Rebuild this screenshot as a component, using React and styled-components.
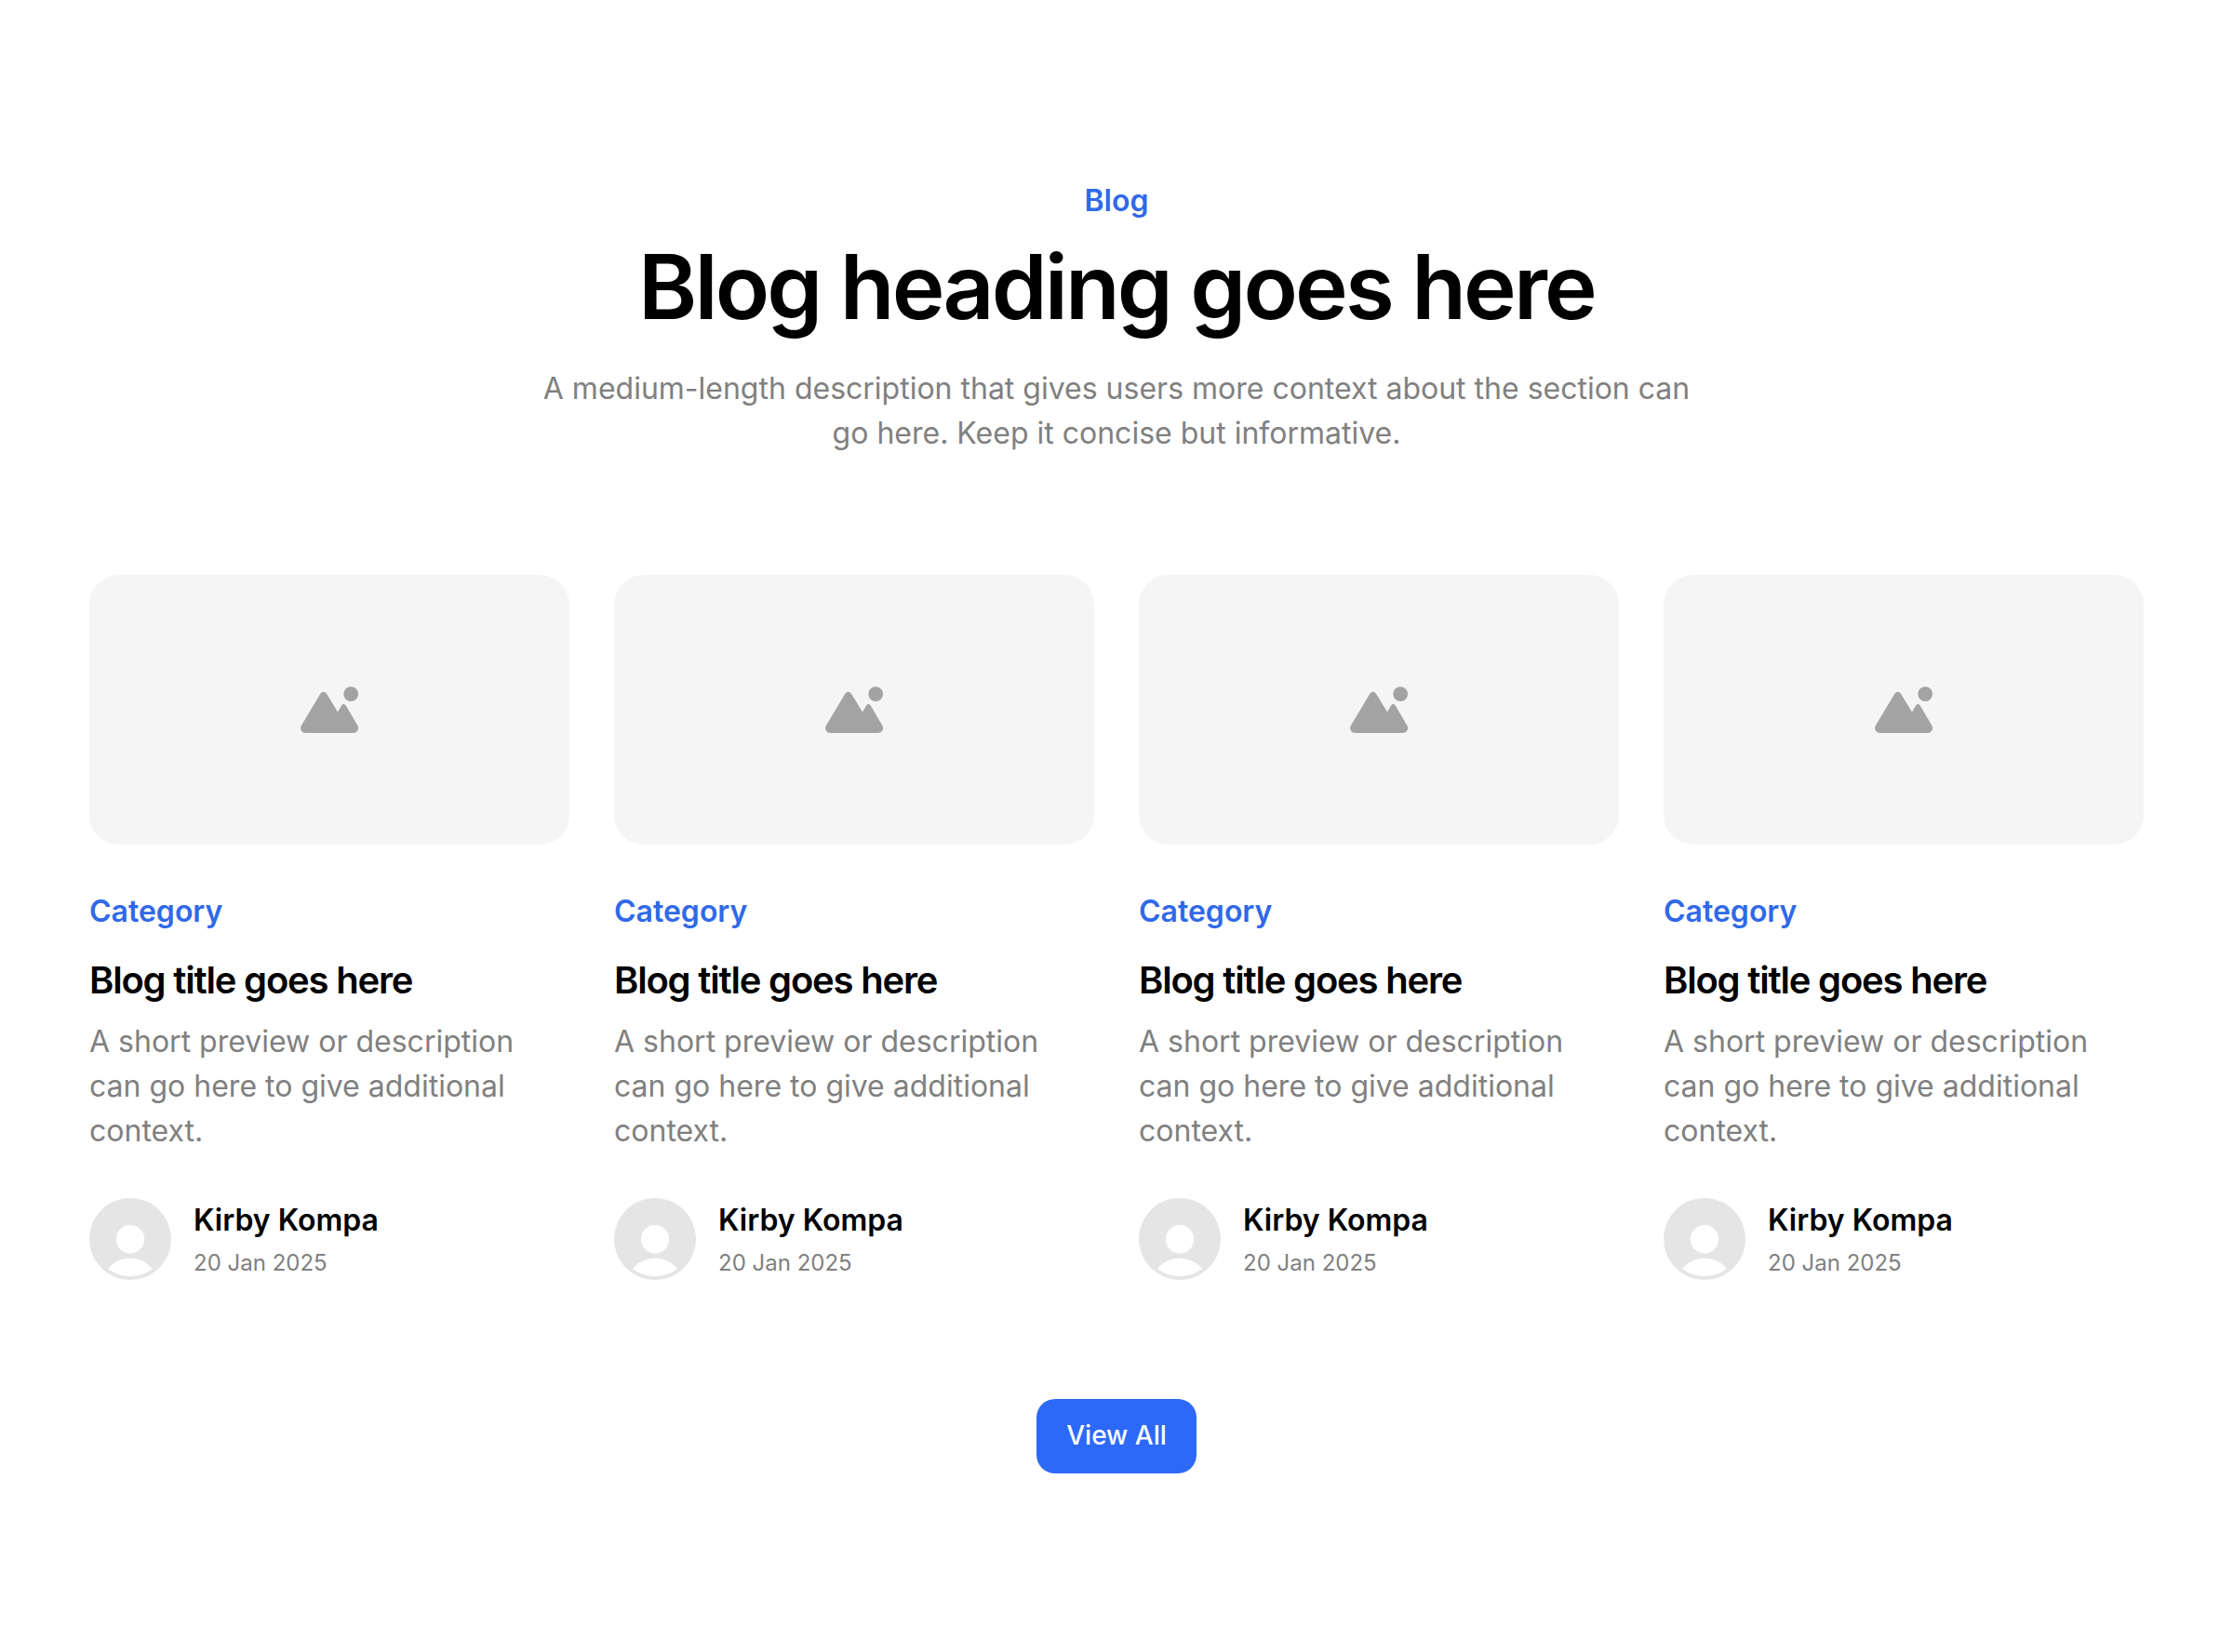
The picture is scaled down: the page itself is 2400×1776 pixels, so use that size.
import React from 'react';
import styled, { createGlobalStyle } from 'styled-components';

const colors = {
  primary: '#2d69f9',
  link: '#3069e8',
  text: '#000000',
  muted: '#808080',
  placeholder: '#f5f5f5',
  icon: '#a3a3a3',
  avatar: '#e5e5e5',
  white: '#ffffff',
};

const posts = [1, 2, 3, 4].map(id => ({
  id,
  category: 'Category',
  title: 'Blog title goes here',
  preview: 'A short preview or description can go here to give additional context.',
  author: 'Kirby Kompa',
  date: '20 Jan 2025',
}));

const GlobalStyle = createGlobalStyle`
  * {
    box-sizing: border-box;
  }

  body {
    margin: 0;
    background: ${colors.white};
    color: ${colors.text};
    font-family: Inter, sans-serif;
  }
`;

const Section = styled.section`
  display: flex;
  flex-direction: column;
  align-items: center;
  gap: 128px;
  padding: 192px 96px;
`;

const Header = styled.header`
  display: flex;
  flex-direction: column;
  align-items: center;
  width: 1280px;
  text-align: center;
`;

const Label = styled.span`
  color: ${colors.link};
  font-size: 32px;
  font-weight: 600;
  line-height: 48px;
`;

const Heading = styled.h1`
  margin: 16px 0 32px;
  font-size: 96px;
  font-weight: 600;
  line-height: 1.1;
  letter-spacing: -0.03em;
`;

const Text = styled.p`
  margin: 0;
  color: ${colors.muted};
  font-size: 32px;
  line-height: 48px;
`;

const Grid = styled.div`
  display: grid;
  grid-template-columns: repeat(4, 1fr);
  gap: 48px;
  width: 100%;
`;

const Card = styled.article`
  display: flex;
  flex-direction: column;
`;

const Thumbnail = styled.div`
  display: flex;
  align-items: center;
  justify-content: center;
  aspect-ratio: 16 / 9;
  margin-bottom: 48px;
  border-radius: 32px;
  background: ${colors.placeholder};
`;

const Title = styled.h2`
  margin: 24px 0 16px;
  font-size: 40px;
  font-weight: 600;
  line-height: 1.3;
  letter-spacing: -0.03em;
`;

const Author = styled.div`
  display: flex;
  gap: 24px;
  margin-top: 48px;
`;

const AuthorInfo = styled.div`
  display: flex;
  flex-direction: column;
  gap: 4px;
`;

const Name = styled.span`
  font-size: 32px;
  font-weight: 600;
  line-height: 48px;
`;

const PostDate = styled.span`
  color: ${colors.muted};
  font-size: 24px;
  line-height: 36px;
`;

const Button = styled.button`
  height: 80px;
  padding: 19px 32px 21px;
  border: 0;
  border-radius: 20px;
  background: ${colors.primary};
  color: ${colors.white};
  font-family: inherit;
  font-size: 28px;
  font-weight: 500;
  line-height: 40px;
  white-space: nowrap;
`;

const ImageIcon = () => (
  <svg width="72" height="72" viewBox="0 0 72 72" fill={colors.icon} aria-hidden="true">
    <circle cx="59.2" cy="19.1" r="7.9" />
    <path d="M26.4 18.8Q29.7 14.9 33 18.8L45 38.5L49.1 31.4Q51.4 28 53.7 31.4L66.2 52.7C68.6 56.7 66 60.9 62 60.9H10.4C6 60.9 3.8 56.7 6 52.7Z" />
  </svg>
);

const Avatar = () => (
  <svg width="88" height="88" viewBox="0 0 88 88" aria-hidden="true">
    <circle cx="44" cy="44" r="44" fill={colors.avatar} />
    <circle cx="44" cy="44.2" r="15.2" fill={colors.white} />
    <path d="M20 76A31 31 0 0 1 68 76A40 40 0 0 1 20 76Z" fill={colors.white} />
  </svg>
);

const BlogCard = ({ category, title, preview, author, date }) => (
  <Card>
    <Thumbnail>
      <ImageIcon />
    </Thumbnail>
    <Label>{category}</Label>
    <Title>{title}</Title>
    <Text>{preview}</Text>
    <Author>
      <Avatar />
      <AuthorInfo>
        <Name>{author}</Name>
        <PostDate>{date}</PostDate>
      </AuthorInfo>
    </Author>
  </Card>
);

const App = () => (
  <>
    <GlobalStyle />
    <Section>
      <Header>
        <Label>Blog</Label>
        <Heading>Blog heading goes here</Heading>
        <Text>
          A medium-length description that gives users more context about the section can go here.
          Keep it concise but informative.
        </Text>
      </Header>
      <Grid>
        {posts.map(post => (
          <BlogCard key={post.id} {...post} />
        ))}
      </Grid>
      <Button type="button">View All</Button>
    </Section>
  </>
);

export default App;
